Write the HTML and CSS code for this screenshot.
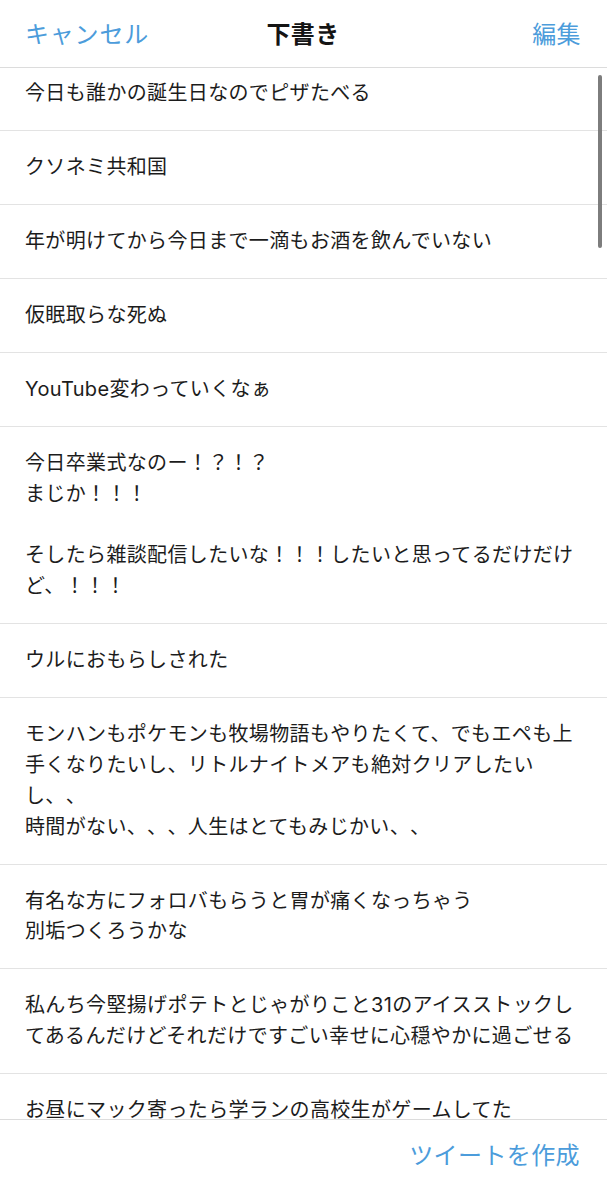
FILE: index.html
```html
<!DOCTYPE html>
<html lang="ja">
<head>
<meta charset="utf-8">
<title>下書き</title>
<link rel="stylesheet" href="styles.css">
</head>
<body>
<div class="screen">
  <header class="nav">
    <span class="nav-btn nav-left">キャンセル</span>
    <span class="nav-title">下書き</span>
    <span class="nav-btn nav-right">編集</span>
  </header>
  <main class="viewport">
    <ul class="drafts">
      <li class="draft">今日も誰かの誕生日なのでピザたべる</li>
      <li class="draft">クソネミ共和国</li>
      <li class="draft">年が明けてから今日まで一滴もお酒を飲んでいない</li>
      <li class="draft">仮眠取らな死ぬ</li>
      <li class="draft">YouTube変わっていくなぁ</li>
      <li class="draft">今日卒業式なのー！？！？<br>まじか！！！<br><br>そしたら雑談配信したいな！！！したいと思ってるだけだけ<br>ど、！！！</li>
      <li class="draft">ウルにおもらしされた</li>
      <li class="draft">モンハンもポケモンも牧場物語もやりたくて、でもエペも上<br>手くなりたいし、リトルナイトメアも絶対クリアしたい<br>し、、<br>時間がない、、、人生はとてもみじかい、、</li>
      <li class="draft">有名な方にフォロバもらうと胃が痛くなっちゃう<br>別垢つくろうかな</li>
      <li class="draft">私んち今堅揚げポテトとじゃがりこと31のアイスストックし<br>てあるんだけどそれだけですごい幸せに心穏やかに過ごせる</li>
      <li class="draft">お昼にマック寄ったら学ランの高校生がゲームしてた</li>
    </ul>
    <div class="scrollbar"></div>
  </main>
  <footer class="toolbar">
    <span class="compose">ツイートを作成</span>
  </footer>
</div>
</body>
</html>
```

FILE: styles.css
```css
* {
  box-sizing: border-box;
}

html, body {
  margin: 0;
  padding: 0;
  background: #ffffff;
}

body {
  font-family: "Inter", "Noto Sans CJK JP", sans-serif;
  color: #1c1c1c;
  text-spacing-trim: space-all;
}

.screen {
  width: 607px;
  height: 1200px;
  display: flex;
  flex-direction: column;
  overflow: hidden;
}

.nav {
  height: 68px;
  flex: 0 0 68px;
  display: grid;
  grid-template-columns: 1fr auto 1fr;
  align-items: center;
  padding: 3px 26px 0 25px;
  border-bottom: 1px solid #dcdcdc;
  font-size: 24px;
  line-height: 30px;
}

.nav-btn {
  color: #4c9cdb;
  letter-spacing: 0.8px;
}

.nav-left {
  justify-self: start;
}

.nav-right {
  justify-self: end;
  letter-spacing: 0.4px;
}

.nav-title {
  font-weight: 700;
  color: #141414;
  letter-spacing: 0.4px;
}

.viewport {
  position: relative;
  flex: 1 1 auto;
  overflow: hidden;
}

.drafts {
  list-style: none;
  margin: -11px 0 0 0;
  padding: 0;
}

.draft {
  padding: 21px 25px 21.3px 25px;
  border-bottom: 1px solid #e3e3e3;
  font-size: 20px;
  line-height: 30.75px;
  letter-spacing: 0.35px;
  white-space: nowrap;
}

.scrollbar {
  position: absolute;
  top: 7px;
  right: 5px;
  width: 4px;
  height: 173px;
  border-radius: 2px;
  background: #7d7d7d;
}

.toolbar {
  flex: 0 0 81px;
  border-top: 1px solid #dcdcdc;
  display: flex;
  justify-content: flex-end;
  padding: 21px 27px 0 0;
  background: #ffffff;
}

.compose {
  font-size: 24px;
  line-height: 30px;
  color: #4c9cdb;
  letter-spacing: 0.4px;
}
```
